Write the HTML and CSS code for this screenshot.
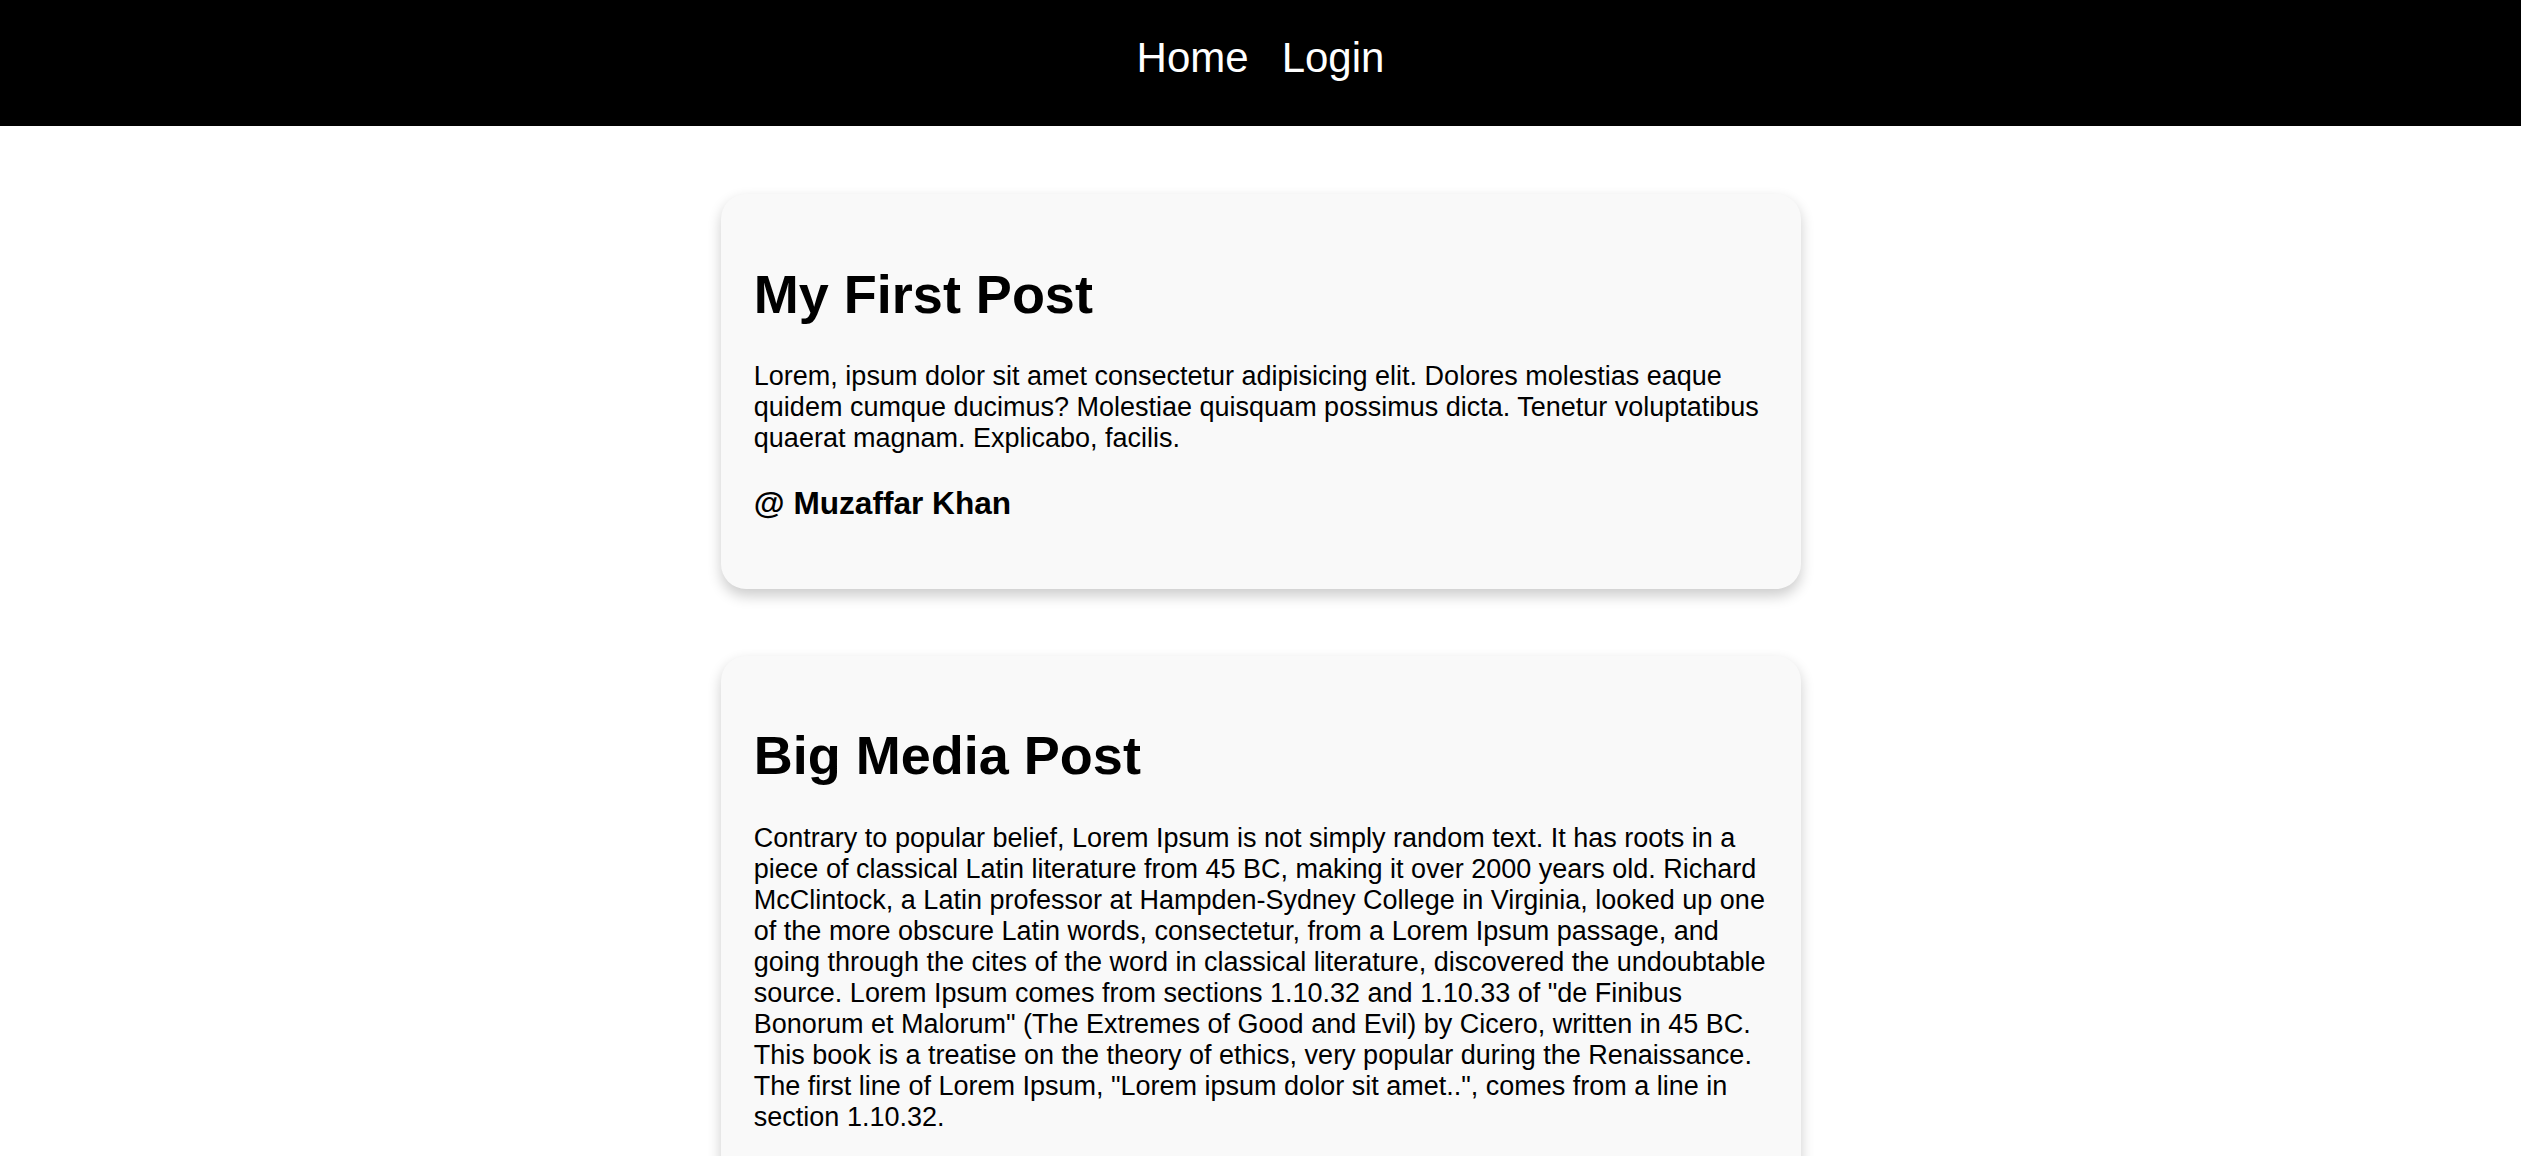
FILE: index.html
```html
<!DOCTYPE html>
<html lang="en">
<head>
<meta charset="utf-8">
<title>Posts</title>
<link rel="stylesheet" href="styles.css">
</head>
<body>
<header class="site-header">
  <nav class="nav">
    <a class="nav-link" href="#">Home</a>
    <a class="nav-link" href="#">Login</a>
  </nav>
</header>
<main class="posts">
  <article class="post">
    <h1 class="post-title">My First Post</h1>
    <p class="post-body">Lorem, ipsum dolor sit amet consectetur adipisicing elit. Dolores molestias eaque quidem cumque ducimus? Molestiae quisquam possimus dicta. Tenetur voluptatibus quaerat magnam. Explicabo, facilis.</p>
    <h3 class="post-author">@ Muzaffar Khan</h3>
  </article>
  <article class="post">
    <h1 class="post-title">Big Media Post</h1>
    <p class="post-body">Contrary to popular belief, Lorem Ipsum is not simply random text. It has roots in a piece of classical Latin literature from 45 BC, making it over 2000 years old. Richard McClintock, a Latin professor at Hampden-Sydney College in Virginia, looked up one of the more obscure Latin words, consectetur, from a Lorem Ipsum passage, and going through the cites of the word in classical literature, discovered the undoubtable source. Lorem Ipsum comes from sections 1.10.32 and 1.10.33 of "de Finibus Bonorum et Malorum" (The Extremes of Good and Evil) by Cicero, written in 45 BC. This book is a treatise on the theory of ethics, very popular during the Renaissance. The first line of Lorem Ipsum, "Lorem ipsum dolor sit amet..", comes from a line in section 1.10.32.</p>
  </article>
</main>
</body>
</html>
```

FILE: styles.css
```css
html, body {
  margin: 0;
  padding: 0;
  background: #ffffff;
}

body {
  font-family: "Liberation Sans", Arial, sans-serif;
  font-size: 27px;
  line-height: 31px;
  color: #000;
}

.site-header {
  background: #000;
  height: 126px;
  box-sizing: border-box;
  padding-top: 34px;
}

.nav {
  display: flex;
  justify-content: center;
  gap: 33px;
}

.nav-link {
  color: #fff;
  text-decoration: none;
  font-size: 42px;
  line-height: 48px;
}

.posts {
  display: flex;
  flex-direction: column;
  align-items: center;
  gap: 67px;
  padding-top: 68px;
}

.post {
  box-sizing: border-box;
  width: 1080px;
  padding: 33.33px 26px 36px 33.33px;
  background: #f9f9f9;
  border-radius: 25px;
  box-shadow: 0 6.67px 13.33px rgba(0, 0, 0, 0.2);
}

.post-title {
  font-size: 54px;
  line-height: 61px;
  font-weight: bold;
  margin: 36.2px 0;
}

.post-body {
  margin: 27px 0;
}

.post-author {
  font-size: 31.6px;
  line-height: 36px;
  font-weight: bold;
  margin: 31.6px 0;
}
```
